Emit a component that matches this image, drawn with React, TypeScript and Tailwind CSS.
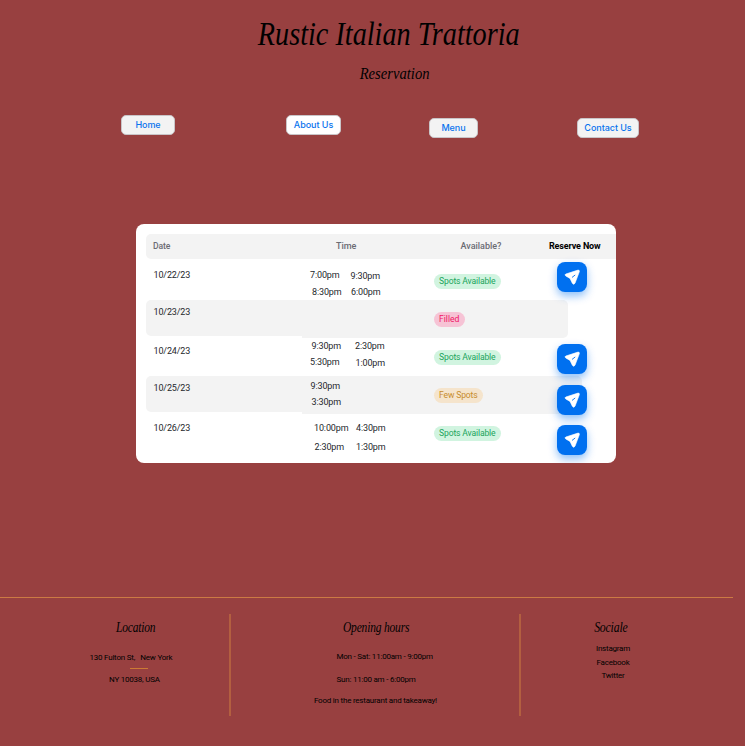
import React from "react";

const roboto = "font-['Roboto','Liberation_Sans',sans-serif]";
const script = "font-['Liberation_Serif',serif] italic";

function Plane() {
  return (
    <svg viewBox="0 0 30 30" className="block h-[30px] w-[30px]" aria-hidden="true">
      <path
        d="M21 8.1 L8.8 12 Q7.2 12.8 8.7 13.9 L13 16.4 L15.3 21.2 Q16.7 23.4 18 21.2 L22.4 9.6 Q22.6 7.8 21 8.1 Z"
        fill="#fff"
        stroke="#fff"
        strokeWidth="0.6"
        strokeLinejoin="round"
      />
      <path d="M15.3 15.2 L17.9 13.2" stroke="#0070f0" strokeWidth="0.9" strokeLinecap="round" />
    </svg>
  );
}

function Reserve({ className }: { className: string }) {
  return (
    <button
      aria-label="Reserve"
      className={`relative z-10 block h-[30px] w-[30px] rounded-[8px] bg-[#0070f0] shadow-[0_4px_8px_rgba(0,112,240,0.45)] ${className}`}
    >
      <Plane />
    </button>
  );
}

function Badge({ className, children }: { className: string; children: React.ReactNode }) {
  return (
    <span className={`block h-[15px] whitespace-nowrap rounded-full pl-[5px] text-[8.6px] leading-[15px] ${className}`}>
      {children}
    </span>
  );
}

type Slot = { time: string; place: string };
type Row = {
  date: string;
  height: string;
  datePlace: string;
  shaded?: boolean;
  wide?: string;
  left: Slot[];
  right: Slot[];
  status: string;
  statusStyle: string;
  button?: string;
};

const green = "bg-[#d1f4e0] text-[#20a45c] w-[67px] tracking-[-0.15px]";

const rows: Row[] = [
  {
    date: "10/22/23", height: "h-[41px]", datePlace: "pt-[10px]",
    left: [{ time: "7:00pm", place: "ml-[8px] mt-[10px]" }, { time: "8:30pm", place: "ml-[10px] mt-[5px]" }],
    right: [{ time: "9:30pm", place: "ml-[4.5px] mt-[10.5px]" }, { time: "6:00pm", place: "ml-[5px] mt-[4.5px]" }],
    status: "Spots Available", statusStyle: `mt-[14.5px] ${green}`, button: "mt-[3px]",
  },
  {
    date: "10/23/23", height: "h-[38px]", datePlace: "pt-[6px]", shaded: true, wide: "w-[266px]",
    left: [], right: [],
    status: "Filled", statusStyle: "mt-[12px] w-[31px] bg-[#f6c3d5] text-[#f01565] tracking-[0px]",
  },
  {
    date: "10/24/23", height: "h-[38px]", datePlace: "pt-[7px]",
    left: [{ time: "9:30pm", place: "ml-[9.5px] mt-[2px]" }, { time: "5:30pm", place: "ml-[8px] mt-[4px]" }],
    right: [{ time: "2:30pm", place: "ml-[9px] mt-[2px]" }, { time: "1:00pm", place: "ml-[9.5px] mt-[5px]" }],
    status: "Spots Available", statusStyle: `mt-[12px] ${green}`, button: "-ml-[0.5px] mt-[5.5px]",
  },
  {
    date: "10/25/23", height: "h-[38px]", datePlace: "pt-[6px]", shaded: true, wide: "w-[280px]",
    left: [{ time: "9:30pm", place: "ml-[8.5px] mt-[3.5px]" }, { time: "3:30pm", place: "ml-[9.5px] mt-[4px]" }],
    right: [],
    status: "Few Spots", statusStyle: "mt-[12px] w-[49px] bg-[#f5e4cc] text-[#c78c2c] tracking-[-0.15px]", button: "mt-[8.5px]",
  },
  {
    date: "10/26/23", height: "h-[48px]", datePlace: "pt-[7.5px]",
    left: [{ time: "10:00pm", place: "ml-[12px] mt-[8px]" }, { time: "2:30pm", place: "ml-[12.5px] mt-[7px]" }],
    right: [{ time: "4:30pm", place: "ml-[10px] mt-[8px]" }, { time: "1:30pm", place: "ml-[10px] mt-[7px]" }],
    status: "Spots Available", statusStyle: `mt-[12px] ${green}`, button: "mt-[11px]",
  },
];

function Times({ slots }: { slots: Slot[] }) {
  return (
    <div className="w-[44px]">
      {slots.map((s) => (
        <span key={s.time} className={`block whitespace-nowrap leading-[12px] ${s.place}`}>
          {s.time}
        </span>
      ))}
    </div>
  );
}

function TableRow({ row }: { row: Row }) {
  return (
    <div className={`flex text-[9px] tracking-[-0.14px] text-[#25282c] ${row.height}`}>
      <div className={`h-[36px] w-[156px] shrink-0 rounded-l-[5px] pl-[7.5px] leading-[12px] ${row.datePlace} ${row.shaded ? "bg-[#f3f3f3]" : ""}`}>
        {row.date}
      </div>
      <div className={`flex shrink-0 rounded-r-[5px] ${row.wide ?? "w-[266px]"} ${row.shaded ? "bg-[#f3f3f3]" : ""}`}>
        <div className="flex w-[132px] shrink-0">
          <Times slots={row.left} />
          <Times slots={row.right} />
        </div>
        <div className="w-[123px] shrink-0">
          <Badge className={row.statusStyle}>{row.status}</Badge>
        </div>
        <div className="w-0">{row.button && <Reserve className={row.button} />}</div>
      </div>
    </div>
  );
}

function NavButton({ className, children }: { className: string; children: React.ReactNode }) {
  return (
    <button
      className={`h-[20px] shrink-0 whitespace-nowrap rounded-[5px] border border-[#c9c5c8] text-center font-['Inter',sans-serif] text-[9px] font-medium leading-[18px] tracking-[-0.05px] text-[#0a73ee] ${className}`}
    >
      {children}
    </button>
  );
}

export default function App() {
  return (
    <div className={`flex h-[746px] w-[745px] flex-col overflow-hidden bg-[#984040] text-black ${roboto}`}>
      <header className="flex h-[114px] flex-col items-center pl-[32px]">
        <h1 className={`mt-[12px] origin-center scale-x-[0.83] whitespace-nowrap text-[34px] leading-[44px] ${script}`}>
          Rustic Italian Trattoria
        </h1>
        <h2 className={`ml-[13px] mt-[6px] origin-center scale-x-[0.86] whitespace-nowrap text-[17px] leading-[24px] ${script}`}>
          Reservation
        </h2>
      </header>

      <nav className="flex h-[110px] items-start pl-[121px]">
        <NavButton className="mt-[0.5px] w-[54px] bg-[#f3f3f3]">Home</NavButton>
        <NavButton className="ml-[111px] mt-[0.5px] w-[55px] bg-white">About Us</NavButton>
        <NavButton className="ml-[88px] mt-[4px] w-[49px] bg-[#f3f3f3]">Menu</NavButton>
        <NavButton className="ml-[99px] mt-[4px] w-[62px] bg-[#f3f3f3]">Contact Us</NavButton>
      </nav>

      <main className="ml-[136px] h-[239px] w-[480px] shrink-0 overflow-hidden rounded-[8px] bg-white pl-[10px] pt-[10px]">
        <div className="flex h-[25px] items-center rounded-l-[5px] bg-[#f3f3f3] font-medium text-[#6b6b73]">
          <span className="w-[190px] pl-[7px] text-[8.6px] tracking-[-0.15px]">Date</span>
          <span className="w-[124.5px] text-[9px]">Time</span>
          <span className="w-[88.5px] whitespace-nowrap text-[9px]">Available?</span>
          <span className="whitespace-nowrap text-[9px] font-bold tracking-[-0.15px] text-black">Reserve Now</span>
        </div>
        {rows.map((row) => (
          <TableRow key={row.date} row={row} />
        ))}
      </main>

      <footer className="mt-[134px] h-[149px] w-[733px] border-t border-[#cc7a44] text-[8px] leading-[10px] tracking-[-0.22px]">
        <div className="flex pt-[16px]">
          <section className="h-[102px] w-[231px] border-r-2 border-[#b35f40]">
            <h3 className={`ml-[116px] mt-[4px] origin-left scale-x-[0.82] whitespace-nowrap text-[14px] leading-[20px] ${script}`}>
              Location
            </h3>
            <p className="ml-[89.5px] mt-[14.5px] whitespace-pre">130 Fulton St,   New York</p>
            <div className="ml-[130px] mt-[5px] h-px w-[18px] bg-[#cc7a34]" />
            <p className="ml-[109px] mt-[6.5px] whitespace-nowrap">NY 10038, USA</p>
          </section>
          <section className="h-[102px] w-[290px] border-r-2 border-[#b35f40]">
            <h3 className={`ml-[112px] mt-[4px] origin-left scale-x-[0.82] whitespace-nowrap text-[14px] leading-[20px] ${script}`}>
              Opening hours
            </h3>
            <p className="ml-[105.5px] mt-[14px] whitespace-nowrap">Mon - Sat: 11:00am - 9:00pm</p>
            <p className="ml-[105.5px] mt-[12.5px] whitespace-nowrap">Sun: 11:00 am - 6:00pm</p>
            <p className="ml-[83px] mt-[11.5px] whitespace-nowrap">Food in the restaurant and takeaway!</p>
          </section>
          <section className="flex w-[184px] flex-col items-center">
            <h3 className={`mr-[5px] mt-[4px] origin-center scale-x-[0.84] whitespace-nowrap text-[14px] leading-[20px] ${script}`}>
              Sociale
            </h3>
            <p className="mt-[5.5px]">Instagram</p>
            <p className="mt-[4px]">Facebook</p>
            <p className="mt-[3.5px]">Twitter</p>
          </section>
        </div>
      </footer>
    </div>
  );
}
